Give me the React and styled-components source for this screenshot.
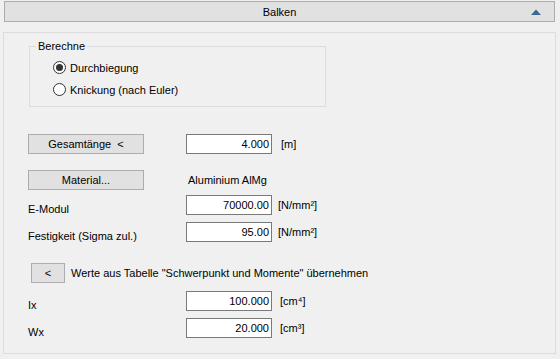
import React from "react";
import styled, { createGlobalStyle } from "styled-components";

const Global = createGlobalStyle`
  html, body { margin: 0; padding: 0; background: #f0f0f0; }
  body {
    font-family: "Liberation Sans", Arial, sans-serif;
    font-size: 11px;
    color: #000;
  }
`;

const Page = styled.div`
  width: 560px;
  height: 359px;
  padding-top: 1px;
  box-sizing: border-box;
  overflow: hidden;
`;

const Header = styled.div`
  margin-left: 4px;
  width: 551px;
  height: 21px;
  box-sizing: border-box;
  border: 1px solid #adadad;
  background: #e1e1e1;
  display: flex;
  align-items: center;
  justify-content: center;
  position: relative;
`;

const HeaderArrow = styled.svg`
  position: absolute;
  right: 13px;
  top: 7px;
`;

const Panel = styled.div`
  margin-top: 10px;
  margin-left: 3px;
  width: 553px;
  height: 322px;
  box-sizing: border-box;
  border: 1px solid #dcdcdc;
  padding-left: 24px;
  display: flex;
  flex-direction: column;
`;

const GroupBox = styled.div`
  position: relative;
  margin-top: 13px;
  margin-left: 1px;
  width: 297px;
  height: 61px;
  box-sizing: border-box;
  border: 1px solid #dcdcdc;
  padding: 14px 0 0 23px;
  display: flex;
  flex-direction: column;
  gap: 9px;
`;

const Legend = styled.span`
  position: absolute;
  left: 6px;
  top: -8px;
  padding: 0 2px;
  background: #f0f0f0;
  line-height: 14px;
`;

const RadioRow = styled.div`
  display: flex;
  align-items: center;
  height: 13px;
  gap: 4px;
`;

const RadioCircle = styled.span`
  width: 13px;
  height: 13px;
  box-sizing: border-box;
  border-radius: 50%;
  border: 1px solid #333;
  background: #fff;
  display: flex;
  align-items: center;
  justify-content: center;
  &::after {
    content: "";
    width: 7px;
    height: 7px;
    border-radius: 50%;
    background: ${(p) => (p.$checked ? "#333" : "transparent")};
  }
`;

const Row = styled.div`
  display: flex;
  align-items: center;
  height: ${(p) => p.$h || 20}px;
  margin-top: ${(p) => p.$mt}px;
`;

const Button = styled.div`
  width: ${(p) => p.$w}px;
  height: 20px;
  box-sizing: border-box;
  border: 1px solid #adadad;
  background: #e1e1e1;
  display: flex;
  align-items: center;
  justify-content: center;
  flex-shrink: 0;
  white-space: pre;
  margin-left: ${(p) => p.$ml || 0}px;
`;

const Label = styled.div`
  width: 158px;
  flex-shrink: 0;
  align-self: flex-end;
`;

const Input = styled.div`
  width: 86px;
  height: 20px;
  box-sizing: border-box;
  border: 1px solid #7a7a7a;
  background: #fff;
  display: flex;
  align-items: center;
  justify-content: flex-end;
  padding-right: 2px;
  margin-top: ${(p) => p.$mt || 0}px;
  margin-left: ${(p) => p.$ml || 0}px;
  flex-shrink: 0;
`;

const Unit = styled.span`
  margin-left: ${(p) => p.$ml}px;
`;

const PlainText = styled.span`
  margin-left: ${(p) => p.$ml}px;
`;

export default function App() {
  return (
    <>
      <Global />
      <Page>
        <Header>
          Balken
          <HeaderArrow width="10" height="6" viewBox="0 0 10 6">
            <polygon points="0,6 10,6 5,0.5" fill="#3b6896" />
          </HeaderArrow>
        </Header>
        <Panel>
          <GroupBox>
            <Legend>Berechne</Legend>
            <RadioRow>
              <RadioCircle $checked />
              Durchbiegung
            </RadioRow>
            <RadioRow>
              <RadioCircle />
              Knickung (nach Euler)
            </RadioRow>
          </GroupBox>

          <Row $mt={26} $h={21}>
            <Button $w={116}>{"Gesamtänge  <"}</Button>
            <Input $ml={42} $mt={1}>4.000</Input>
            <Unit $ml={9}>[m]</Unit>
          </Row>

          <Row $mt={16}>
            <Button $w={116}>Material...</Button>
            <PlainText $ml={44}>Aluminium AlMg</PlainText>
          </Row>

          <Row $mt={5}>
            <Label>E-Modul</Label>
            <Input>70000.00</Input>
            <Unit $ml={6}>[N/mm²]</Unit>
          </Row>

          <Row $mt={7}>
            <Label>Festigkeit (Sigma zul.)</Label>
            <Input>95.00</Input>
            <Unit $ml={6}>[N/mm²]</Unit>
          </Row>

          <Row $mt={21}>
            <Button $w={34} $ml={3}>{"<"}</Button>
            <PlainText $ml={6}>Werte aus Tabelle "Schwerpunkt und Momente" übernehmen</PlainText>
          </Row>

          <Row $mt={8}>
            <Label>Ix</Label>
            <Input>100.000</Input>
            <Unit $ml={8}>[cm⁴]</Unit>
          </Row>

          <Row $mt={7}>
            <Label>Wx</Label>
            <Input>20.000</Input>
            <Unit $ml={8}>[cm³]</Unit>
          </Row>
        </Panel>
      </Page>
    </>
  );
}
